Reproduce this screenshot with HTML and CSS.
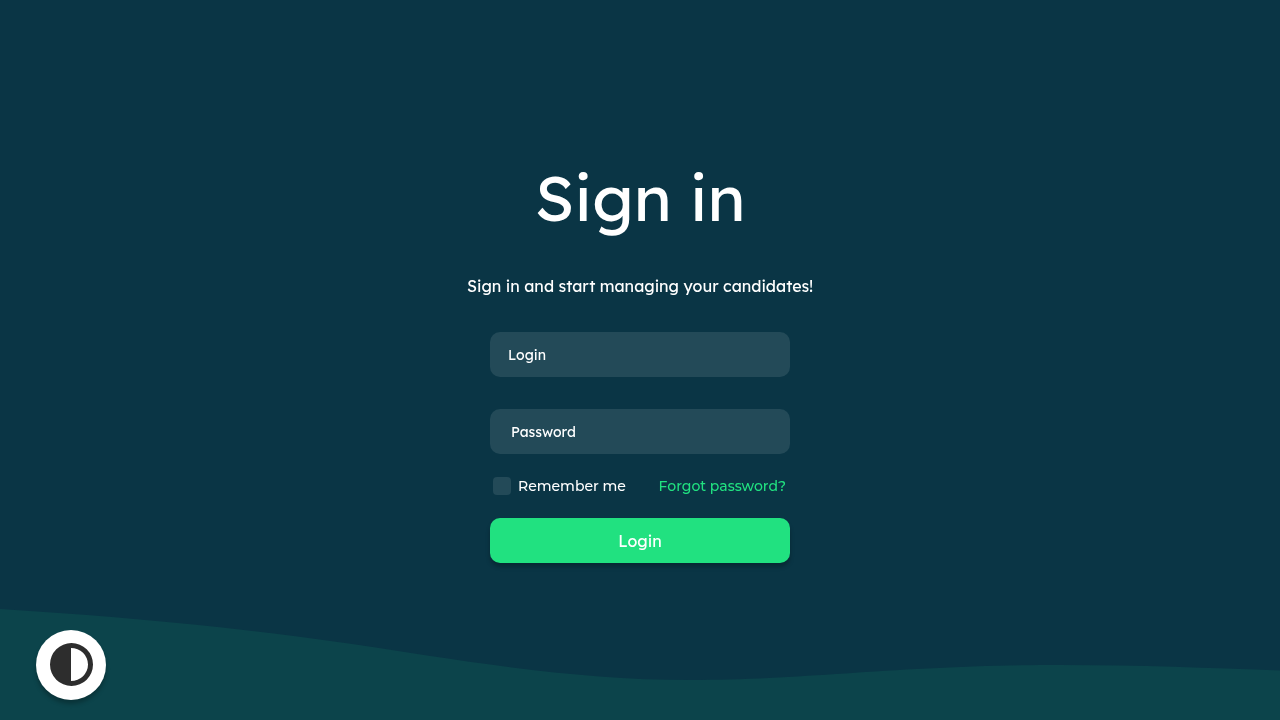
FILE: index.html
```html
<!DOCTYPE html>
<html lang="en">
<head>
  <meta charset="utf-8">
  <meta name="viewport" content="width=device-width, initial-scale=1">
  <title>Sign in</title>
  <link rel="stylesheet" href="styles.css">
</head>
<body>
  <svg class="wave" viewBox="0 0 1280 120" preserveAspectRatio="none" aria-hidden="true">
    <path d="M0 9C160 19 290 33 427 55.5C510 68 600 80 690 80C810 80 900 65 1060 65C1140 65 1210 68 1280 70.5V120H0Z"/>
  </svg>
  <main class="page">
    <h1 class="title">Sign in</h1>
    <p class="subtitle">Sign in and start managing your candidates!</p>
    <form class="form">
      <input class="field" type="text" placeholder="Login" aria-label="Login">
      <input class="field field-password" type="password" placeholder="Password" aria-label="Password">
      <div class="options">
        <label class="remember" for="remember"><input class="checkbox" id="remember" type="checkbox">Remember me</label>
        <a class="forgot" href="#">Forgot password?</a>
      </div>
      <button class="submit" type="submit">Login</button>
    </form>
  </main>
  <button class="theme-toggle" type="button" aria-label="Toggle theme">
    <svg class="theme-icon" viewBox="0 0 43 43" aria-hidden="true">
      <path fill="#2d2d2d" fill-rule="evenodd" d="M21.5 0a21.5 21.5 0 1 1 0 43a21.5 21.5 0 0 1 0-43ZM21 5V38A17 16.5 0 0 0 21 5Z"/>
    </svg>
  </button>
</body>
</html>
```
FILE: styles.css
```css
* {
  box-sizing: border-box;
}

body {
  margin: 0;
  background: #0a3545;
  color: #fff;
  font-family: Lexend, Inter, "Liberation Sans", sans-serif;
}

.wave {
  position: fixed;
  left: 0;
  bottom: 0;
  width: 100%;
  height: 120px;
  fill: #0c444b;
}

.page {
  position: relative;
  min-height: 100vh;
  display: flex;
  flex-direction: column;
  align-items: center;
  justify-content: center;
}

.title {
  margin: 0;
  font-size: 64px;
  line-height: 80px;
  font-weight: 400;
}

.subtitle {
  margin: 37px 0 34px;
  font-size: 16px;
  line-height: 24px;
  text-align: center;
}

.form {
  width: 100%;
  max-width: 300px;
  display: flex;
  flex-direction: column;
}

.field {
  width: 100%;
  height: 45px;
  padding: 0 18px;
  border: 0;
  border-radius: 10px;
  background: #234a58;
  color: #fff;
  font: inherit;
  font-size: 14px;
}

.field::placeholder {
  color: #fff;
  opacity: 1;
}

.field-password {
  margin-top: 32px;
  padding: 0 21px;
}

.options {
  display: flex;
  align-items: center;
  justify-content: space-between;
  margin: 20px 0;
  padding: 0 4px 0 3px;
  font-family: Montserrat, Inter, "Liberation Sans", sans-serif;
  font-size: 14px;
  line-height: 24px;
  font-weight: 500;
}

.remember {
  display: flex;
  align-items: center;
  gap: 7px;
}

.checkbox {
  appearance: none;
  width: 18px;
  height: 18px;
  margin: 0;
  border-radius: 4px;
  background: #234a58;
}

.checkbox:checked {
  background: #21e180;
}

.forgot {
  color: #21e180;
  text-decoration: none;
}

.submit {
  height: 45px;
  border: 0;
  border-radius: 10px;
  background: #21e180;
  color: #fff;
  font: inherit;
  font-size: 16px;
  box-shadow: 0 4px 4px rgba(0, 0, 0, 0.25);
}

.theme-toggle {
  position: fixed;
  left: 36px;
  bottom: 20px;
  width: 70px;
  height: 70px;
  padding: 0 0 1px 1px;
  border: 0;
  border-radius: 50%;
  background: #fff;
  display: flex;
  align-items: center;
  justify-content: center;
  box-shadow: 0 4px 4px rgba(0, 0, 0, 0.25);
}

.theme-icon {
  width: 43px;
  height: 43px;
}
```
